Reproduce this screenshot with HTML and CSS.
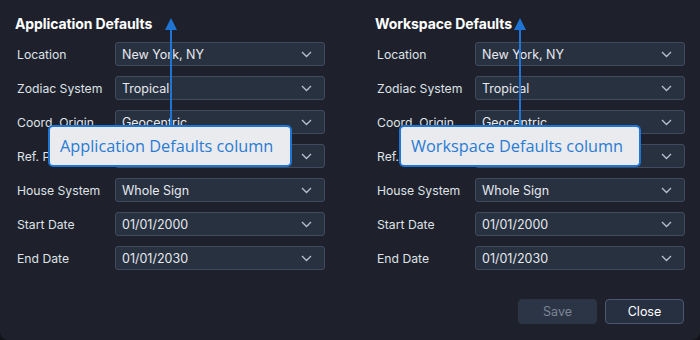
FILE: index.html
```html
<!DOCTYPE html>
<html>
<head>
<meta charset="utf-8">
<link rel="stylesheet" href="styles.css">
</head>
<body>
<div class="dialog">
  <div class="columns">
    <section class="col">
      <h2 class="heading">Application Defaults</h2>
      <div class="rows">
        <div class="row"><span class="label">Location</span><div class="select"><span>New York, NY</span><svg class="chev" width="11" height="7" viewBox="0 0 11 7"><path d="M1 1 L5.5 5.5 L10 1" fill="none" stroke="#b8c0cc" stroke-width="1.3"/></svg></div></div>
        <div class="row"><span class="label">Zodiac System</span><div class="select"><span>Tropical</span><svg class="chev" width="11" height="7" viewBox="0 0 11 7"><path d="M1 1 L5.5 5.5 L10 1" fill="none" stroke="#b8c0cc" stroke-width="1.3"/></svg></div></div>
        <div class="row"><span class="label">Coord. Origin</span><div class="select"><span>Geocentric</span><svg class="chev" width="11" height="7" viewBox="0 0 11 7"><path d="M1 1 L5.5 5.5 L10 1" fill="none" stroke="#b8c0cc" stroke-width="1.3"/></svg></div></div>
        <div class="row"><span class="label">Ref. Plane</span><div class="select"><span>Ecliptic</span><svg class="chev" width="11" height="7" viewBox="0 0 11 7"><path d="M1 1 L5.5 5.5 L10 1" fill="none" stroke="#b8c0cc" stroke-width="1.3"/></svg></div></div>
        <div class="row"><span class="label">House System</span><div class="select"><span>Whole Sign</span><svg class="chev" width="11" height="7" viewBox="0 0 11 7"><path d="M1 1 L5.5 5.5 L10 1" fill="none" stroke="#b8c0cc" stroke-width="1.3"/></svg></div></div>
        <div class="row"><span class="label">Start Date</span><div class="select"><span>01/01/2000</span><svg class="chev" width="11" height="7" viewBox="0 0 11 7"><path d="M1 1 L5.5 5.5 L10 1" fill="none" stroke="#b8c0cc" stroke-width="1.3"/></svg></div></div>
        <div class="row"><span class="label">End Date</span><div class="select"><span>01/01/2030</span><svg class="chev" width="11" height="7" viewBox="0 0 11 7"><path d="M1 1 L5.5 5.5 L10 1" fill="none" stroke="#b8c0cc" stroke-width="1.3"/></svg></div></div>
      </div>
    </section>
    <section class="col">
      <h2 class="heading">Workspace Defaults</h2>
      <div class="rows">
        <div class="row"><span class="label">Location</span><div class="select"><span>New York, NY</span><svg class="chev" width="11" height="7" viewBox="0 0 11 7"><path d="M1 1 L5.5 5.5 L10 1" fill="none" stroke="#b8c0cc" stroke-width="1.3"/></svg></div></div>
        <div class="row"><span class="label">Zodiac System</span><div class="select"><span>Tropical</span><svg class="chev" width="11" height="7" viewBox="0 0 11 7"><path d="M1 1 L5.5 5.5 L10 1" fill="none" stroke="#b8c0cc" stroke-width="1.3"/></svg></div></div>
        <div class="row"><span class="label">Coord. Origin</span><div class="select"><span>Geocentric</span><svg class="chev" width="11" height="7" viewBox="0 0 11 7"><path d="M1 1 L5.5 5.5 L10 1" fill="none" stroke="#b8c0cc" stroke-width="1.3"/></svg></div></div>
        <div class="row"><span class="label">Ref. Plane</span><div class="select"><span>Ecliptic</span><svg class="chev" width="11" height="7" viewBox="0 0 11 7"><path d="M1 1 L5.5 5.5 L10 1" fill="none" stroke="#b8c0cc" stroke-width="1.3"/></svg></div></div>
        <div class="row"><span class="label">House System</span><div class="select"><span>Whole Sign</span><svg class="chev" width="11" height="7" viewBox="0 0 11 7"><path d="M1 1 L5.5 5.5 L10 1" fill="none" stroke="#b8c0cc" stroke-width="1.3"/></svg></div></div>
        <div class="row"><span class="label">Start Date</span><div class="select"><span>01/01/2000</span><svg class="chev" width="11" height="7" viewBox="0 0 11 7"><path d="M1 1 L5.5 5.5 L10 1" fill="none" stroke="#b8c0cc" stroke-width="1.3"/></svg></div></div>
        <div class="row"><span class="label">End Date</span><div class="select"><span>01/01/2030</span><svg class="chev" width="11" height="7" viewBox="0 0 11 7"><path d="M1 1 L5.5 5.5 L10 1" fill="none" stroke="#b8c0cc" stroke-width="1.3"/></svg></div></div>
      </div>
    </section>
  </div>
  <div class="footer">
    <button class="btn btn-save">Save</button>
    <button class="btn btn-close">Close</button>
  </div>

  <div class="annot annot-app">
    <svg class="arrow" width="14" height="108" viewBox="0 0 14 108"><polygon points="7,0 1,12 13,12" fill="#1f74d4"/><rect x="6" y="10" width="2" height="98" fill="#1f74d4"/></svg>
    <div class="callout">Application Defaults column</div>
  </div>
  <div class="annot annot-ws">
    <svg class="arrow" width="14" height="108" viewBox="0 0 14 108"><polygon points="7,0 1,12 13,12" fill="#1f74d4"/><rect x="6" y="10" width="2" height="98" fill="#1f74d4"/></svg>
    <div class="callout">Workspace Defaults column</div>
  </div>
</div>
</body>
</html>
```
FILE: styles.css
```css
html, body {
  margin: 0;
  padding: 0;
  background: #111318;
}
.dialog {
  position: relative;
  width: 700px;
  height: 340px;
  background: #1e212b;
  border-radius: 0 0 8px 8px;
  font-family: Inter, "Noto Sans", sans-serif;
  box-sizing: border-box;
  padding: 15px 15px 0 15px;
  display: flex;
  flex-direction: column;
}
.columns {
  display: flex;
  gap: 50px;
}
.col {
  width: 310px;
}
.heading {
  margin: 0;
  font-size: 14px;
  line-height: 17px;
  font-weight: 700;
  color: #ffffff;
  letter-spacing: -0.1px;
}
.rows {
  margin-top: 10px;
  display: flex;
  flex-direction: column;
  gap: 10px;
}
.row {
  display: flex;
  align-items: center;
  height: 24px;
}
.label {
  width: 100px;
  padding-left: 2px;
  box-sizing: border-box;
  font-size: 12.2px;
  color: #dfe2e8;
}
.select {
  flex: 1;
  height: 24px;
  box-sizing: border-box;
  background: #283140;
  border: 1px solid #404b60;
  border-radius: 3px;
  display: flex;
  align-items: center;
  justify-content: space-between;
  padding: 0 12px 0 6px;
  font-size: 12.5px;
  color: #e6e9ee;
}
.chev {
  display: block;
}
.footer {
  margin-top: auto;
  margin-bottom: 16px;
  display: flex;
  justify-content: flex-end;
  gap: 8px;
  padding-right: 1px;
}
.btn {
  width: 79px;
  height: 25px;
  border-radius: 4px;
  font-family: Inter, "Noto Sans", sans-serif;
  font-size: 12.5px;
  box-sizing: border-box;
}
.btn-save {
  background: #2c3545;
  border: 1px solid #2c3545;
  color: #7c8596;
}
.btn-close {
  background: #263040;
  border: 1px solid #4b5772;
  color: #ffffff;
}
.annot {
  position: absolute;
  top: 18px;
  display: flex;
  flex-direction: column;
  align-items: flex-start;
}
.annot-app { left: 48px; }
.annot-ws { left: 399px; }
.arrow {
  display: block;
  margin-bottom: -1px;
}
.annot-app .arrow { margin-left: 116px; }
.annot-ws .arrow { margin-left: 114px; }
.callout {
  height: 42px;
  box-sizing: border-box;
  background: #e9ebef;
  border: 2px solid #1f74d4;
  border-radius: 5px;
  padding: 0 10px 1px 10px;
  display: flex;
  align-items: center;
  font-family: "Open Sans", "Noto Sans", sans-serif;
  font-size: 16.3px;
  color: #2a7bd4;
}
.annot-app .callout { width: 244px; }
.annot-ws .callout { width: 242px; }
```
